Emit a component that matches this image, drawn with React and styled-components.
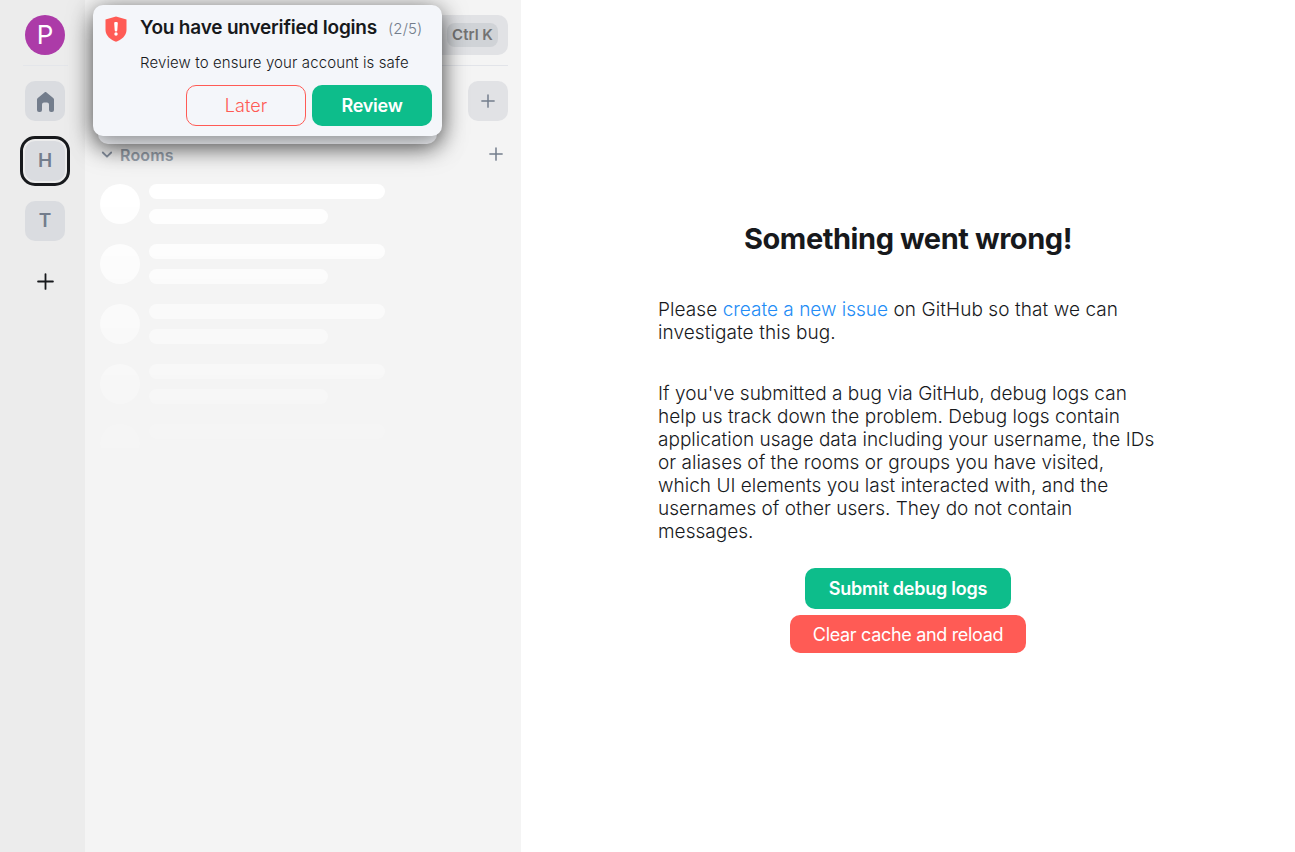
import React from "react";
import styled, { createGlobalStyle } from "styled-components";

const GlobalStyle = createGlobalStyle`
  *, *::before, *::after { box-sizing: border-box; }
  body { margin: 0; font-family: Inter, "Liberation Sans", sans-serif; font-size: 19px; font-weight: 300; line-height: 23px; color: #17191c; background: #fff; }
  button { font: inherit; border: 0; padding: 0; cursor: pointer; }
  h1, h2, p { margin: 0; }
`;

const Shell = styled.div`
  position: relative;
  display: flex;
  height: 852px;
  overflow: hidden;
`;

const SpaceBar = styled.nav`
  flex: 0 0 85px;
  display: flex;
  flex-direction: column;
  align-items: center;
  padding: 15px 0 0 5px;
  background: #ececec;
`;

const UserAvatar = styled.div`
  width: 40px;
  height: 40px;
  border-radius: 50%;
  background: #ac3ba8;
  color: #fff;
  font-size: 26px;
  font-weight: 400;
  line-height: 40px;
  text-align: center;
`;

const SpaceDivider = styled.div`
  width: 45px;
  height: 1px;
  margin: 10px 0 10px;
  background: #e4e6ea;
`;

const SpaceSlot = styled.div`
  width: 50px;
  height: 50px;
  margin-bottom: 10px;
  padding: 2px;
  border: 3px solid ${(p) => (p.$active ? "#17191c" : "transparent")};
  border-radius: 15px;
`;

const SpaceTile = styled.button`
  display: flex;
  align-items: center;
  justify-content: center;
  width: 40px;
  height: 40px;
  padding: ${(p) => (p.$icon ? "2px 0 0 1px" : "0 0 2px")};
  border-radius: 10px;
  background: #dadce0;
  color: #737d8c;
  font-size: 19px;
  font-weight: 600;
`;

const NewSpace = styled.button`
  display: flex;
  align-items: center;
  justify-content: center;
  width: 40px;
  height: 40px;
  margin-top: 5px;
  background: none;
  color: #17191c;
`;

const LeftPanel = styled.aside`
  flex: 0 0 436px;
  background: #f4f4f4;
  padding: 15px 13px 0 15px;
`;

const SearchBar = styled.div`
  display: flex;
  align-items: center;
  justify-content: flex-end;
  height: 40px;
  padding-right: 10px;
  border-radius: 10px;
  background: #e1e2e5;
`;

const Shortcut = styled.kbd`
  width: 51px;
  height: 24px;
  border-radius: 8px;
  background: #d0d3d7;
  color: #737373;
  font: 600 15px/24px Inter, sans-serif;
  text-align: center;
`;

const PanelDivider = styled.div`
  height: 1px;
  margin: 10px 0 15px;
  background: #e2e4e9;
`;

const HeaderRow = styled.div`
  display: flex;
  justify-content: flex-end;
  height: 40px;
`;

const AddButton = styled.button`
  display: flex;
  align-items: center;
  justify-content: center;
  width: 40px;
  height: 40px;
  border-radius: 10px;
  background: #e1e2e5;
  color: #737d8c;
`;

const SectionRow = styled.div`
  display: flex;
  align-items: center;
  height: 24px;
  margin-top: 22px;
  padding-right: 4px;
  color: #737d8c;
`;

const SectionTitle = styled.h2`
  flex: 1;
  margin-left: 5px;
  padding-top: 1px;
  color: #99a2ad;
  font-size: 16px;
  font-weight: 600;
  letter-spacing: 0.15px;
`;

const SectionAdd = styled.span`
  display: flex;
  padding: 0 1px 2px 0;
`;

const SkeletonList = styled.div`
  height: 288px;
  margin-top: 17px;
  mask-image: linear-gradient(to bottom, #000, transparent);
`;

const SkeletonRow = styled.div`
  display: flex;
  gap: 9px;
  height: 40px;
  margin-bottom: 20px;
`;

const SkeletonAvatar = styled.div`
  width: 40px;
  height: 40px;
  border-radius: 50%;
  background: #fff;
`;

const SkeletonLines = styled.div`
  display: flex;
  flex-direction: column;
  justify-content: space-between;
`;

const SkeletonLine = styled.div`
  width: ${(p) => p.$width}px;
  height: 15px;
  border-radius: 8px;
  background: #fff;
`;

const Main = styled.main`
  flex: 1;
  display: flex;
  justify-content: center;
  padding-top: 221px;
`;

const ErrorBody = styled.section`
  display: flex;
  flex-direction: column;
  align-items: center;
  width: 500px;
`;

const ErrorTitle = styled.h1`
  font-size: 29px;
  font-weight: 700;
  line-height: 36px;
  letter-spacing: -0.43px;
  white-space: nowrap;
`;

const Paragraph = styled.p`
  width: 100%;
  margin-top: ${(p) => p.$gap}px;
  letter-spacing: ${(p) => p.$tracking}px;
`;

const Link = styled.a`
  color: #238cf5;
  letter-spacing: 0;
  text-decoration: none;
`;

const ActionButton = styled.button`
  width: ${(p) => p.$width}px;
  height: ${(p) => p.$height}px;
  border-radius: 10px;
  background: ${(p) => (p.$danger ? "#ff5b55" : "#0dbd8b")};
  color: #fff;
  font-size: 18px;
  font-weight: ${(p) => (p.$danger ? 400 : 600)};
  letter-spacing: ${(p) => (p.$danger ? -0.32 : -0.24)}px;
  white-space: nowrap;
`;

const Actions = styled.div`
  display: flex;
  flex-direction: column;
  align-items: center;
  gap: 6px;
  margin-top: 25px;
`;

const ToastUnder = styled.div`
  position: absolute;
  left: 98px;
  top: 15px;
  width: 339px;
  height: 129px;
  border-radius: 10px;
  background: #f4f6fa;
  box-shadow: 0 4px 24px rgba(0, 0, 0, 0.5);
`;

const Toast = styled.div`
  position: absolute;
  left: 93px;
  top: 5px;
  width: 349px;
  height: 131px;
  padding: 10px;
  border-radius: 10px;
  background: #f4f6fa;
  box-shadow: 0 4px 24px rgba(0, 0, 0, 0.5);
`;

const ToastHeader = styled.div`
  display: flex;
  align-items: center;
  height: 26px;
`;

const ShieldIcon = styled.svg`
  width: 22px;
  height: 26px;
  margin: 1px 13px 0 2px;
  flex: none;
`;

const ToastTitle = styled.h2`
  margin-top: -2px;
  font-size: 19px;
  font-weight: 600;
  letter-spacing: -0.2px;
  white-space: nowrap;
`;

const ToastCount = styled.span`
  margin-left: 11px;
  color: #737d8c;
  font-size: 15px;
  letter-spacing: 0.1px;
`;

const ToastText = styled.p`
  margin: 10px 0 0 37px;
  font-size: 15px;
  letter-spacing: 0.11px;
  white-space: nowrap;
`;

const ToastButtons = styled.div`
  display: flex;
  justify-content: flex-end;
  gap: 6px;
  margin-top: 11px;
`;

const LaterButton = styled.button`
  width: 120px;
  height: 41px;
  border: 1px solid #ff5b55;
  border-radius: 10px;
  background: none;
  color: #ff5b55;
  font-size: 18px;
  letter-spacing: 0.1px;
`;

const Plus = ({ size, stroke = 1.7 }) => (
  <svg width={size} height={size} viewBox="0 0 16 16" fill="none" stroke="currentColor" strokeWidth={stroke} strokeLinecap="round">
    <path d="M8 1v14M1 8h14" />
  </svg>
);

const Home = () => (
  <svg width="17" height="20" viewBox="0 0 17 20" fill="currentColor">
    <path d="M8.500 0c.4 0 .7.1 1 .4l6.700 5.500c.5.400.8 1 .8 1.600V18a2 2 0 0 1-2 2h-1a2 2 0 0 1-2-2v-5.500a2 2 0 0 0-2-2H7a2 2 0 0 0-2 2V18a2 2 0 0 1-2 2H2a2 2 0 0 1-2-2V7.500c0-.6.3-1.200.8-1.600L7.500.4c.3-.3.6-.4 1-.4z" />
  </svg>
);

const Chevron = () => (
  <svg width="15" height="12" viewBox="0 0 15 12" fill="none" stroke="#8791a0" strokeWidth="1.8" strokeLinecap="round" strokeLinejoin="round">
    <path d="M2.8 3.500 7 7.700l4.200-4.200" />
  </svg>
);

const ROWS = [0, 1, 2, 3, 4];

export default function App() {
  return (
    <Shell>
      <GlobalStyle />
      <SpaceBar>
        <UserAvatar>P</UserAvatar>
        <SpaceDivider />
        <SpaceSlot>
          <SpaceTile $icon aria-label="Home"><Home /></SpaceTile>
        </SpaceSlot>
        <SpaceSlot $active>
          <SpaceTile>H</SpaceTile>
        </SpaceSlot>
        <SpaceSlot>
          <SpaceTile>T</SpaceTile>
        </SpaceSlot>
        <NewSpace aria-label="Create a space"><Plus size={17} /></NewSpace>
      </SpaceBar>
      <LeftPanel>
        <SearchBar><Shortcut>Ctrl K</Shortcut></SearchBar>
        <PanelDivider />
        <HeaderRow>
          <AddButton aria-label="Add"><Plus size={14} /></AddButton>
        </HeaderRow>
        <SectionRow>
          <Chevron />
          <SectionTitle>Rooms</SectionTitle>
          <SectionAdd><Plus size={14} /></SectionAdd>
        </SectionRow>
        <SkeletonList>
          {ROWS.map((row) => (
            <SkeletonRow key={row}>
              <SkeletonAvatar />
              <SkeletonLines>
                <SkeletonLine $width={236} />
                <SkeletonLine $width={179} />
              </SkeletonLines>
            </SkeletonRow>
          ))}
        </SkeletonList>
      </LeftPanel>
      <Main>
        <ErrorBody>
          <ErrorTitle>Something went wrong!</ErrorTitle>
          <Paragraph $gap={41} $tracking={0.08}>
            Please <Link>create a new issue</Link> on GitHub so that we can investigate this bug.
          </Paragraph>
          <Paragraph $gap={38} $tracking={0.02}>
            If you've submitted a bug via GitHub, debug logs can help us track down the problem. Debug logs contain
            application usage data including your username, the IDs or aliases of the rooms or groups you have visited,
            which UI elements you last interacted with, and the usernames of other users. They do not contain messages.
          </Paragraph>
          <Actions>
            <ActionButton $width={206} $height={41}>Submit debug logs</ActionButton>
            <ActionButton $width={236} $height={38} $danger>Clear cache and reload</ActionButton>
          </Actions>
        </ErrorBody>
      </Main>
      <ToastUnder />
      <Toast>
        <ToastHeader>
          <ShieldIcon viewBox="0 0 22 26">
            <path fill="#ff5b55" d="M11 .6 21.500 3.400v10.400c0 6.200-5.400 10.200-10.500 12C5.900 24 .5 20 .5 13.800V3.400z" />
            <path fill="#fff" d="M9.200 7.200a1.200 1.200 0 0 1 1.200-1.300h1.200a1.200 1.200 0 0 1 1.200 1.300l-.5 7a1.300 1.300 0 0 1-2.600 0z" />
            <circle cx="11" cy="18" r="1.700" fill="#fff" />
          </ShieldIcon>
          <ToastTitle>You have unverified logins</ToastTitle>
          <ToastCount>(2/5)</ToastCount>
        </ToastHeader>
        <ToastText>Review to ensure your account is safe</ToastText>
        <ToastButtons>
          <LaterButton>Later</LaterButton>
          <ActionButton $width={120} $height={41}>Review</ActionButton>
        </ToastButtons>
      </Toast>
    </Shell>
  );
}
